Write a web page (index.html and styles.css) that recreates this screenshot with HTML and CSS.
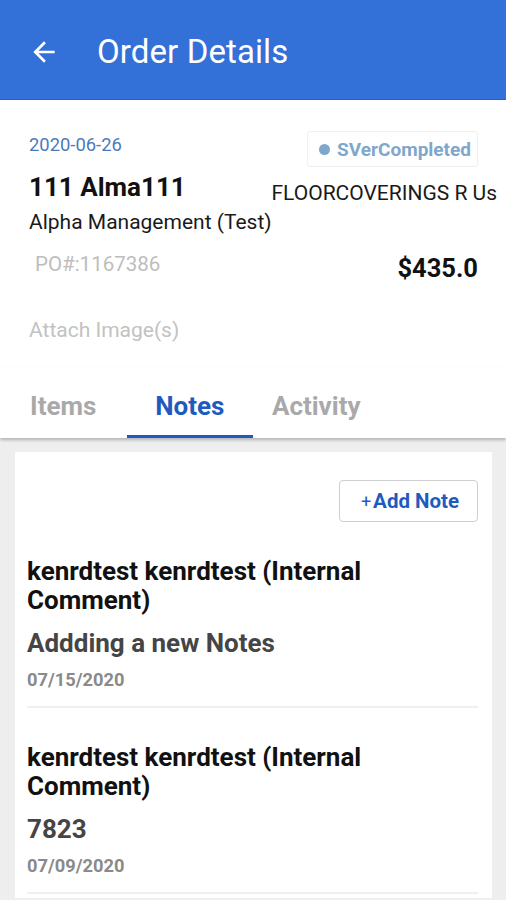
FILE: index.html
```html
<!DOCTYPE html>
<html lang="en">
<head>
  <meta charset="UTF-8" />
  <meta name="viewport" content="width=device-width, initial-scale=1.0"/>
  <title>Order Details</title>
  <link rel="stylesheet" href="styles.css">
</head>
<body>
  <header class="app-bar">
    <svg class="back" width="32" height="32" viewBox="0 0 24 24">
      <path d="M20 11H7.83l5.59-5.59L12 4l-8 8 8 8 1.41-1.41L7.83 13H20v-2z" fill="#fff"/>
    </svg>
    <h1>Order Details</h1>
  </header>

  <section class="summary">
    <div class="row">
      <span class="date">2020-06-26</span>
      <span class="status"><span class="dot"></span>SVerCompleted</span>
    </div>
    <div class="row row-name">
      <span class="name">111 Alma111</span>
      <span class="vendor">FLOORCOVERINGS R Us</span>
    </div>
    <div class="company">Alpha Management (Test)</div>
    <div class="row row-po">
      <span class="po">PO#:1167386</span>
      <span class="price">$435.0</span>
    </div>
    <div class="attach">Attach Image(s)</div>
  </section>

  <nav class="tabs">
    <div class="tab">Items</div>
    <div class="tab active">Notes</div>
    <div class="tab">Activity</div>
  </nav>

  <main class="content">
    <div class="card">
      <div class="card-top">
        <button class="add-note"><span class="plus">+</span>Add Note</button>
      </div>
      <div class="note">
        <div class="note-title">kenrdtest kenrdtest (Internal Comment)</div>
        <div class="note-body">Addding a new Notes</div>
        <div class="note-date">07/15/2020</div>
      </div>
      <div class="note">
        <div class="note-title">kenrdtest kenrdtest (Internal Comment)</div>
        <div class="note-body">7823</div>
        <div class="note-date">07/09/2020</div>
      </div>
    </div>
  </main>
</body>
</html>
```

FILE: styles.css
```css
body {
  margin: 0;
  font-family: Roboto, 'Noto Sans', sans-serif;
  background: #eeeeee;
  color: #111;
  height: 900px;
  overflow: hidden;
}

.app-bar {
  height: 100px;
  box-sizing: border-box;
  background-color: #3370d7;
  border-bottom: 1px solid #2a60bd;
  display: flex;
  align-items: center;
  padding: 3px 0 0 28px;
}

.app-bar .back {
  margin-right: 37px;
  margin-top: 1px;
}

.app-bar h1 {
  margin: 0;
  color: #fff;
  font-weight: 400;
  font-size: 33px;
  letter-spacing: 0.1px;
}

.summary {
  background: #fff;
  padding: 31px 28px 24px 29px;
}

.row {
  display: flex;
  justify-content: space-between;
  align-items: flex-start;
}

.date {
  color: #4b7bbd;
  font-size: 18.4px;
  line-height: 22px;
  margin-top: 3px;
}

.status {
  display: flex;
  align-items: center;
  height: 34px;
  border: 1px solid #eef0f2;
  border-radius: 3px;
  padding: 0 6px 0 11px;
  color: #7fa7cc;
  font-weight: 700;
  font-size: 19px;
}

.status .dot {
  width: 11px;
  height: 11px;
  border-radius: 50%;
  background: #7fa7cc;
  margin-right: 7px;
}

.row-name {
  margin-top: 5px;
}

.name {
  font-weight: 700;
  font-size: 26px;
  line-height: 30px;
}

.vendor {
  font-size: 21px;
  line-height: 30px;
  margin-top: 6px;
  margin-right: -19px;
  color: #1a1a1a;
}

.company {
  font-size: 21px;
  line-height: 26px;
  margin-top: 1px;
  color: #1a1a1a;
}

.row-po {
  margin-top: 16px;
}

.po {
  color: #bdbdbd;
  font-size: 20.5px;
  line-height: 26px;
  margin-left: 6px;
}

.price {
  font-weight: 700;
  font-size: 25.5px;
  line-height: 30px;
  margin-top: 2px;
}

.attach {
  color: #c2c2c2;
  font-size: 21px;
  line-height: 26px;
  margin-top: 34px;
}

.tabs {
  display: flex;
  background: #fff;
  box-shadow: 0 2px 3px rgba(0, 0, 0, 0.25);
  position: relative;
}

.tab {
  width: 126.5px;
  text-align: center;
  font-weight: 700;
  font-size: 26px;
  line-height: 30px;
  color: #a9a9a9;
  padding: 24px 0 14px;
  border-bottom: 3px solid transparent;
}

.tab.active {
  color: #1f5bbf;
  border-bottom-color: #1f5bbf;
}

.content {
  padding: 14px 14px 0 15px;
}

.card {
  background: #fff;
  padding: 28px 14px 0 12px;
  min-height: 446px;
  box-sizing: border-box;
}

.card-top {
  display: flex;
  justify-content: flex-end;
}

.add-note {
  font-family: Roboto, sans-serif;
  background: #fff;
  border: 1px solid #cfcfcf;
  border-radius: 4px;
  width: 139px;
  height: 42px;
  color: #1f5bbf;
  font-weight: 700;
  font-size: 20.5px;
  padding: 0 0 0 3px;
}

.add-note .plus {
  font-weight: 400;
  font-size: 18px;
  margin-right: 2px;
}

.note {
  padding: 35px 0 15px;
  border-bottom: 2px solid #f0f0f0;
}

.note-title {
  font-weight: 700;
  font-size: 26px;
  line-height: 29px;
}

.note-body {
  font-weight: 700;
  font-size: 26px;
  line-height: 30px;
  color: #454545;
  margin-top: 13px;
}

.note-date {
  font-weight: 700;
  font-size: 18.3px;
  line-height: 22px;
  color: #8a8a8a;
  margin-top: 11px;
}
```
